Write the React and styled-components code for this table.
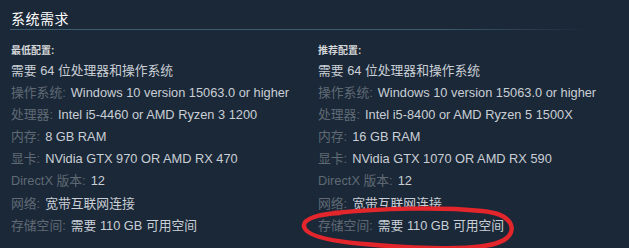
import React from 'react';
import styled, { createGlobalStyle } from 'styled-components';

const GlobalStyle = createGlobalStyle`
  html, body {
    margin: 0;
    padding: 0;
    background: #1b2838;
  }
  body {
    font-family: "Liberation Sans", "Noto Sans CJK SC", sans-serif;
  }
`

const Panel = styled.section`
  position: relative;
  width: 629px;
  height: 248px;
  overflow: hidden;
  background: #1b2838;
  padding: 9px 0 0 11px;
  box-sizing: border-box;
`

const Title = styled.h2`
  margin: 0;
  font-size: 14px;
  line-height: 20px;
  font-weight: normal;
  color: #ffffff;
  letter-spacing: 0.5px;
`

const Rule = styled.div`
  height: 1px;
  width: 580px;
  margin: 0 0 13px -1px;
  background: linear-gradient(to right, #3d5a6f 0%, #3d5a6f 75%, rgba(61, 90, 111, 0) 100%);
`

const Columns = styled.div`
  display: flex;
`

const Column = styled.div`
  width: 307px;
`

const ColumnHead = styled.div`
  font-size: 10px;
  line-height: 16px;
  font-weight: bold;
  color: #d6d7d8;
  margin-bottom: 1px;
`

const List = styled.ul`
  list-style: none;
  margin: 0;
  padding: 0;
`

const Item = styled.li`
  font-size: 12.8px;
  line-height: 22.1px;
  color: #c9cfd5;
  white-space: nowrap;
`

const Label = styled.span`
  color: #5f6a74;
  margin-right: 5px;
`

const Circle = styled.svg`
  position: absolute;
  left: 296px;
  top: 204px;
  pointer-events: none;
`

const minimum = [
  [null, '需要 64 位处理器和操作系统'],
  ['操作系统:', 'Windows 10 version 15063.0 or higher'],
  ['处理器:', 'Intel i5-4460 or AMD Ryzen 3 1200'],
  ['内存:', '8 GB RAM'],
  ['显卡:', 'NVidia GTX 970 OR AMD RX 470'],
  ['DirectX 版本:', '12'],
  ['网络:', '宽带互联网连接'],
  ['存储空间:', '需要 110 GB 可用空间'],
];

const recommended = [
  [null, '需要 64 位处理器和操作系统'],
  ['操作系统:', 'Windows 10 version 15063.0 or higher'],
  ['处理器:', 'Intel i5-8400 or AMD Ryzen 5 1500X'],
  ['内存:', '16 GB RAM'],
  ['显卡:', 'NVidia GTX 1070 OR AMD RX 590'],
  ['DirectX 版本:', '12'],
  ['网络:', '宽带互联网连接'],
  ['存储空间:', '需要 110 GB 可用空间'],
];

const ReqColumn = ({ head, rows }) => (
  <Column>
    <ColumnHead>{head}</ColumnHead>
    <List>
      {rows.map(([label, value], i) => (
        <Item key={i}>
          {label && <Label>{label}</Label>}
          {value}
        </Item>
      ))}
    </List>
  </Column>
)

const App = () => (
  <>
    <GlobalStyle />
    <Panel>
      <Title>系统需求</Title>
      <Rule />
      <Columns>
        <ReqColumn head="最低配置:" rows={minimum} />
        <ReqColumn head="推荐配置:" rows={recommended} />
      </Columns>
      <Circle width="230" height="48" viewBox="0 0 230 48">
        <path
          d="M44 9 C 22 10, 7 15, 8 22 C 9 32, 36 38, 80 41 C 130 45, 190 47, 208 36 C 222 27, 218 10, 186 7 C 146 3, 86 4, 38 9"
          fill="none"
          stroke="#e3262b"
          strokeWidth="4.5"
          strokeLinecap="round"
        />
      </Circle>
    </Panel>
  </>
);

export default App;
